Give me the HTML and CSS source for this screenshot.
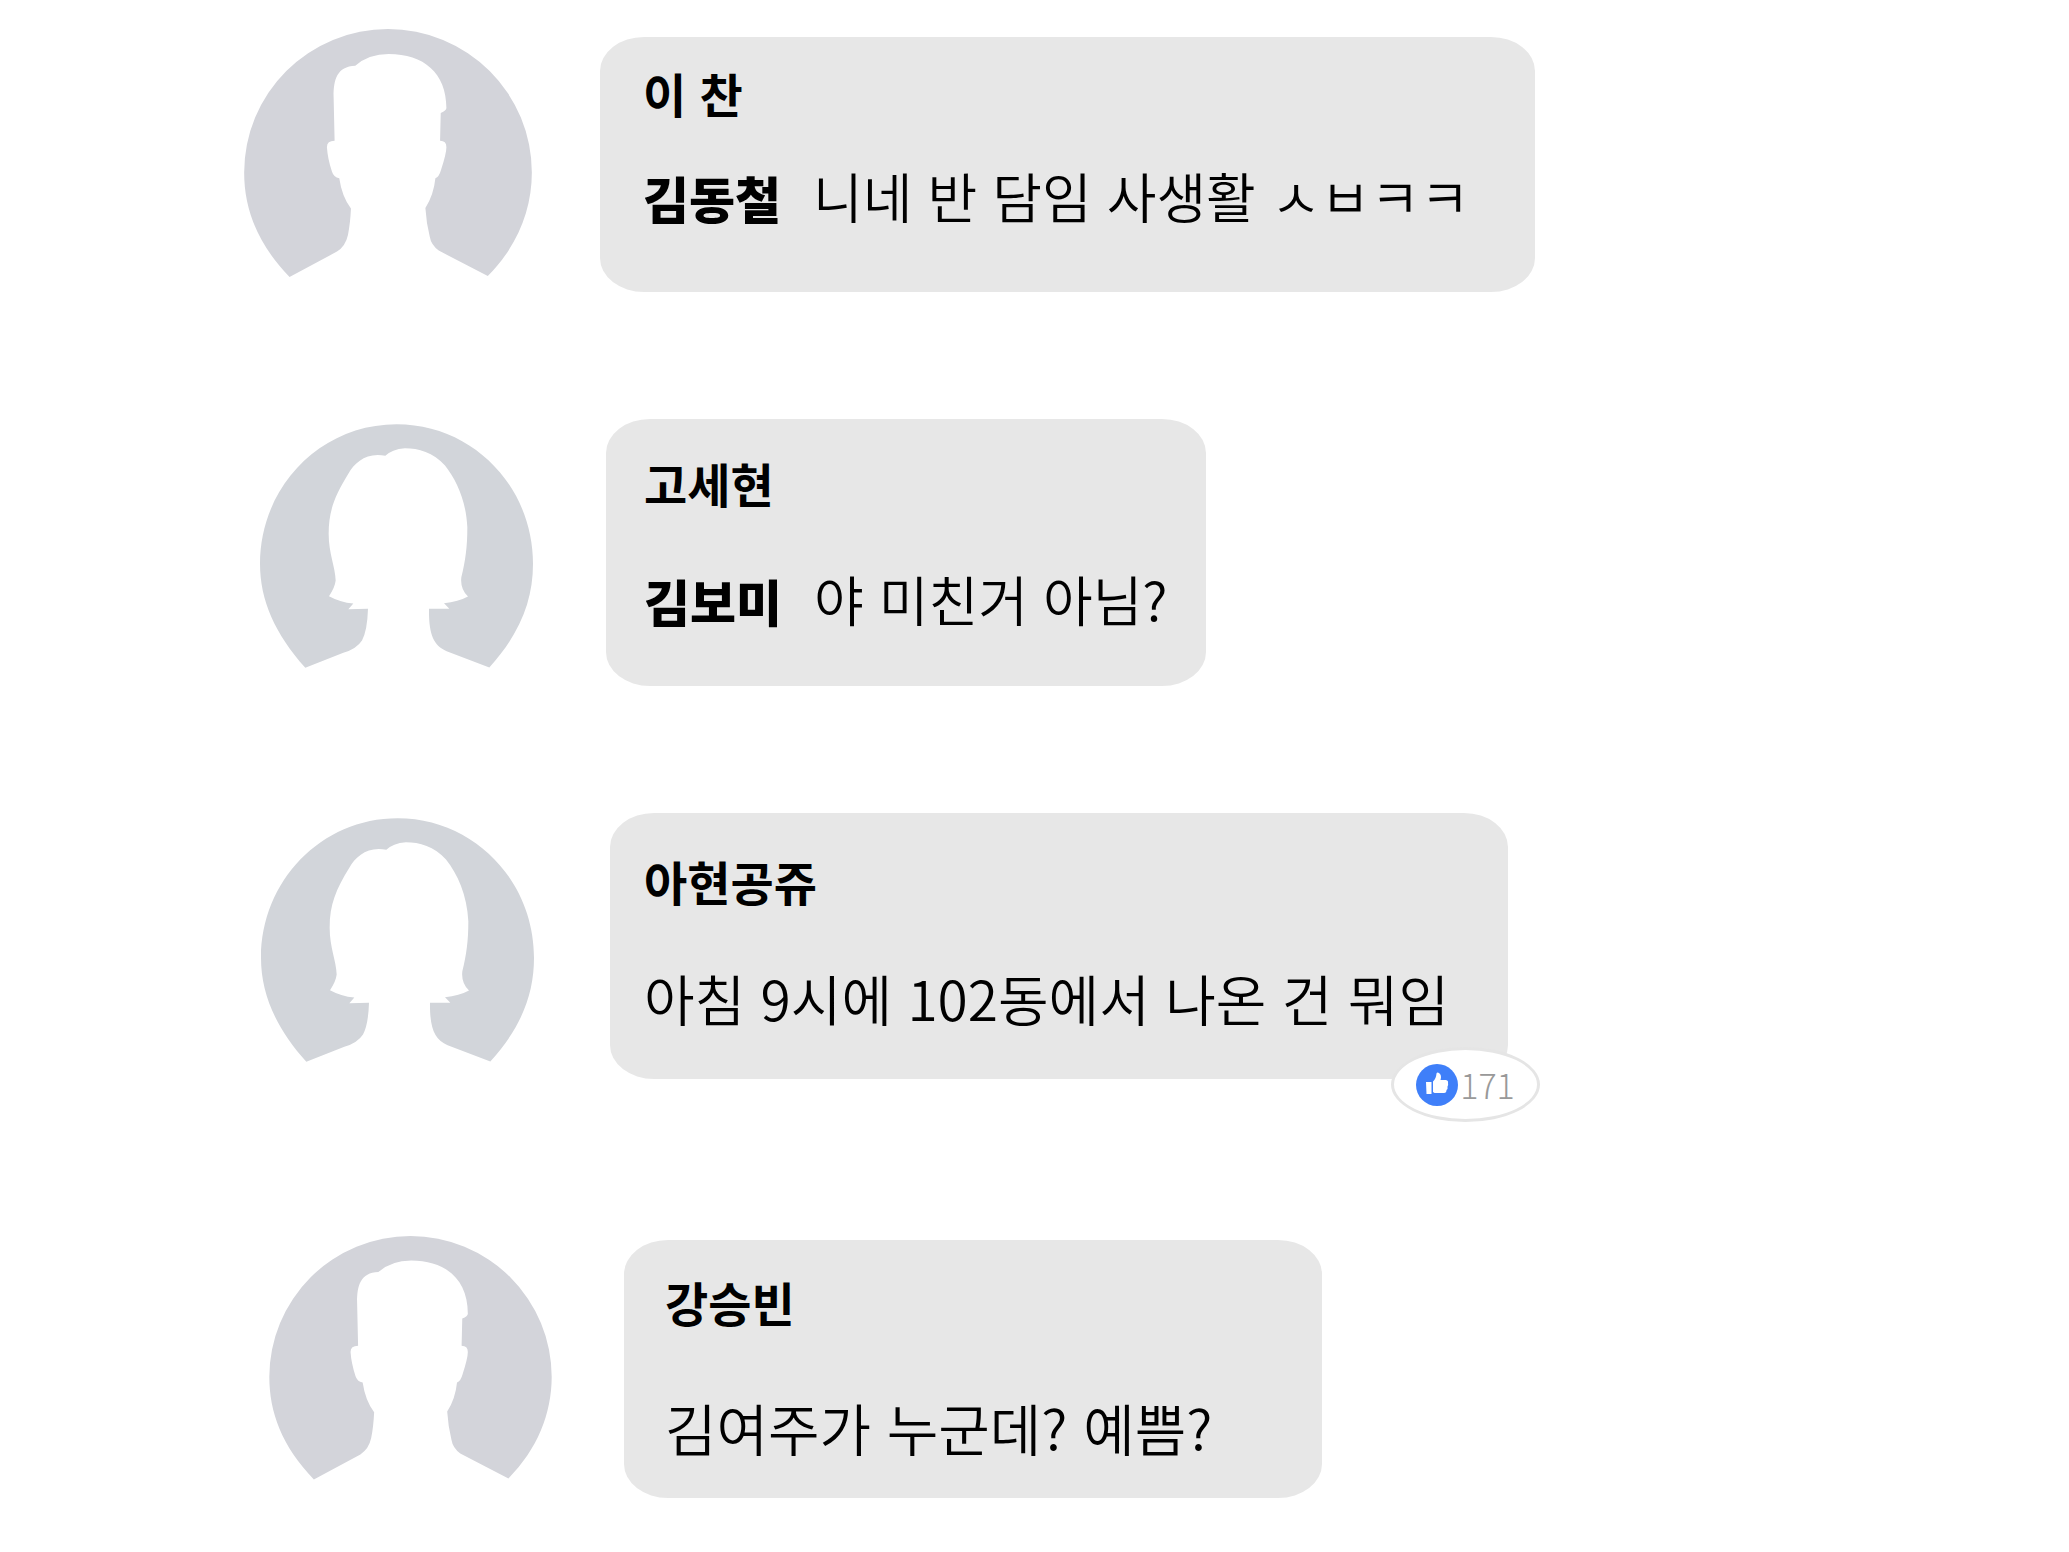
FILE: index.html
```html
<!DOCTYPE html>
<html lang="ko">
  <head>
    <meta charset="UTF-8" />
    <meta name="viewport" content="width=device-width, initial-scale=1.0" />
    <title>댓글</title>
    <link rel="stylesheet" href="styles.css">
  </head>
  <body>
    <svg class="sprite" aria-hidden="true">
      <symbol id="man" viewBox="72 58 862 812">
        <path d="M208 801 C110 700 72 595 72 488 A431 430 0 0 1 934 488 C934 600 890 710 802 798 L655 722 Q632 705 628 680 Q618 640 615 594 Q640 555 645 505 Q656 502 662 480 Q678 430 678 412 Q678 393 659 393 L661 310 Q678 303 678 295 C678 190 610 133 505 133 Q445 133 405 168 C350 170 340 210 340 260 L343 393 Q320 393 320 412 Q322 445 335 485 Q340 502 357 505 Q365 560 392 596 Q390 640 383 675 Q376 708 350 725 Z" />
      </symbol>
      <symbol id="woman" viewBox="60 71 819 770">
        <path d="M196 802 C105 700 60 600 60 490 C60 260 240 71 470 71 C700 71 879 260 879 490 C879 600 840 700 748 801 L620 752 C580 735 566 700 567 625 L628 625 L612 608 Q655 604 684 588 Q660 565 664 530 C676 480 682 440 682 380 C678 300 650 240 615 195 C580 155 535 143 495 143 Q455 146 436 166 C380 155 345 185 325 220 C285 285 266 330 266 400 C266 460 286 500 287 540 Q285 560 267 587 Q300 605 340 609 L325 626 L384 625 Q382 690 366 720 Q350 745 310 757 Z" />
      </symbol>
    </svg>

    <main class="comments">
      <article class="comment comment-chan">
        <svg class="avatar man"><use href="#man" /></svg>
        <div class="bubble">
          <h2 class="name">이 찬</h2>
          <p class="message"><strong class="mention">김동철</strong>니네 반 담임 사생활 ㅅㅂㅋㅋ</p>
        </div>
      </article>

      <article class="comment comment-sehyun">
        <svg class="avatar woman"><use href="#woman" /></svg>
        <div class="bubble">
          <h2 class="name">고세현</h2>
          <p class="message"><strong class="mention">김보미</strong>야 미친거 아님?</p>
        </div>
      </article>

      <article class="comment comment-ahyun">
        <svg class="avatar woman"><use href="#woman" /></svg>
        <div class="bubble">
          <h2 class="name">아현공쥬</h2>
          <p class="message">아침 9시에 102동에서 나온 건 뭐임</p>
          <div class="likes">
            <svg class="like-icon" viewBox="0 0 42 42">
              <circle cx="21" cy="21" r="21" fill="#3f7ff9" />
              <path fill="#fff" d="M10 18h5.500v12H10.500zM17 17.500Q20 15 20.500 9.500Q21 8 23 9Q26 11 24.500 16H30Q32.500 16.500 32 19Q32.500 21 31.500 22.500Q32 25 30.500 26Q30.500 29 28 29H18.500L17 28z" />
            </svg>
            <span>171</span>
          </div>
        </div>
      </article>

      <article class="comment comment-seungbin">
        <svg class="avatar man"><use href="#man" /></svg>
        <div class="bubble">
          <h2 class="name">강승빈</h2>
          <p class="message">김여주가 누군데? 예쁨?</p>
        </div>
      </article>
    </main>
  </body>
</html>
```
FILE: styles.css
```css
* {
  box-sizing: border-box;
}
body {
  margin: 0;
  background-color: #fff;
  color: #000;
  font-family: "Noto Sans CJK KR", sans-serif;
}
.sprite {
  display: none;
}
.comments {
  padding-top: 29px;
}
.comment {
  display: flex;
  align-items: center;
}
.avatar {
  flex: none;
}
.man {
  width: 288px;
  height: 271px;
  fill: #d3d4da;
}
.woman {
  width: 273px;
  height: 257px;
  fill: #d2d5da;
}
.bubble {
  position: relative;
  display: flex;
  flex-direction: column;
  border-radius: 44px / 34px;
  background-color: #e7e7e7;
}
.name {
  margin: 0;
  font-size: 47px;
  line-height: 60px;
  font-weight: 700;
}
.message {
  margin: 0;
  font-size: 54px;
  line-height: 80px;
  font-weight: 350;
  white-space: nowrap;
}
.mention {
  margin-right: 32px;
  font-size: 50px;
  line-height: 50px;
  font-weight: 900;
}

.comment-chan {
  gap: 68px;
  margin-bottom: 119px;
  padding-left: 244px;
}
.comment-chan .bubble {
  gap: 33px;
  padding: 26px 65px 56px 43px;
}
.comment-sehyun {
  gap: 73px;
  margin-bottom: 127px;
  padding-left: 260px;
}
.comment-sehyun .bubble {
  gap: 46px;
  padding: 34px 38px 47px 38px;
}
.comment-ahyun {
  gap: 76px;
  margin-bottom: 157px;
  padding-left: 261px;
}
.comment-ahyun .bubble {
  gap: 46px;
  padding: 38px 59px 42px 34px;
}
.comment-ahyun .message {
  font-size: 55px;
}
.comment-seungbin {
  gap: 72px;
  padding-left: 269px;
}
.comment-seungbin .man {
  width: 283px;
  height: 266px;
}
.comment-seungbin .bubble {
  gap: 55px;
  padding: 32px 110px 31px 41px;
}
.comment-seungbin .message {
  font-size: 56px;
}

/* like counter hangs over the bubble corner */
.likes {
  position: absolute;
  right: -32px;
  bottom: -43px;
  display: flex;
  align-items: center;
  justify-content: center;
  gap: 2px;
  width: 149px;
  height: 75px;
  border: 3px solid #e5e5e5;
  border-radius: 50%;
  background-color: #fff;
  color: #999;
  font-size: 34px;
  line-height: 40px;
  font-weight: 300;
}
.like-icon {
  width: 42px;
  height: 42px;
}
```
